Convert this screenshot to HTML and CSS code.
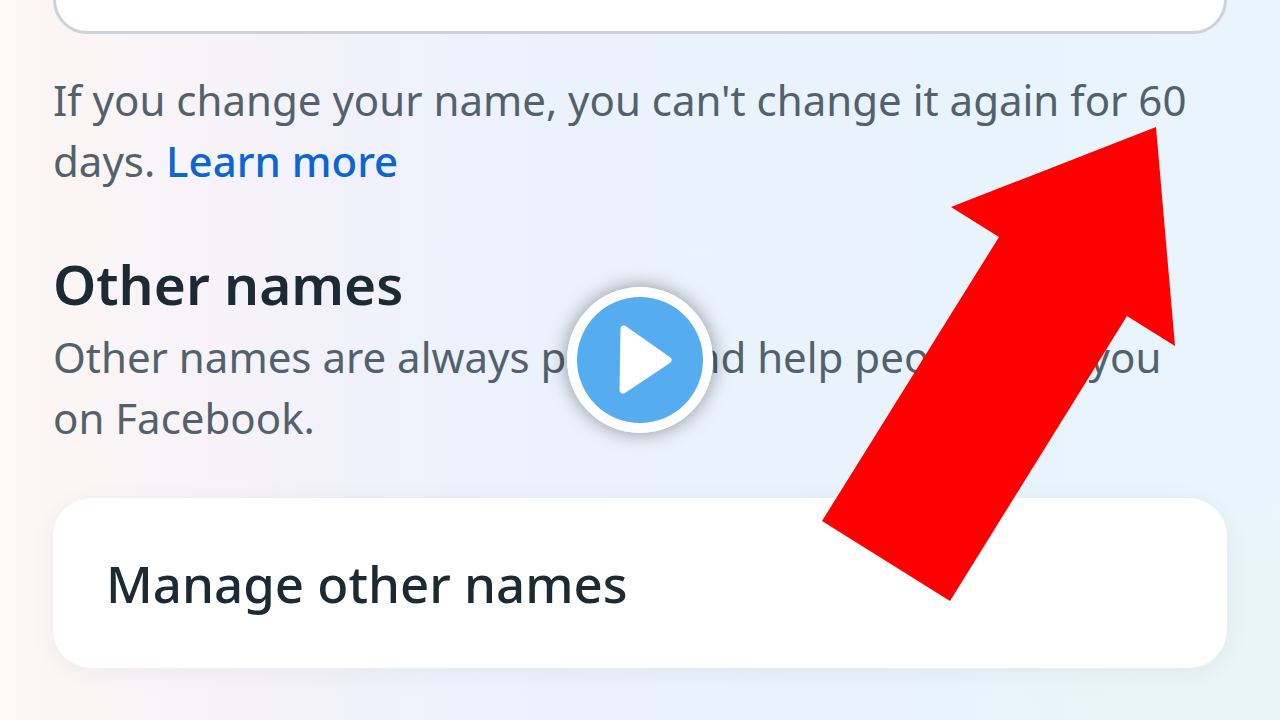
FILE: index.html
```
<!DOCTYPE html>
<html lang="en">
<head>
    <meta charset="UTF-8">
    <meta name="viewport" content="width=device-width, initial-scale=1.0">
    <title>Other names</title>
    <link rel="stylesheet" href="styles.css">
</head>
<body>
    <main class="page">
        <input class="name-field" type="text" aria-label="Name">
        <p class="note">If you change your name, you can't change it again for 60 days. <a href="#learn-more">Learn more</a></p>

        <section class="other-names">
            <h2>Other names</h2>
            <p class="note">Other names are always public and help people find you on Facebook.</p>
            <button class="manage-card" type="button">Manage other names</button>
        </section>

        <!-- Arrow over the content -->
        <svg class="arrow" viewBox="0 0 353 474" aria-hidden="true">
            <polygon points="334,0 129,80 177,110 0,394 128,474 305,189 353,219"/>
        </svg>

        <!-- Play button -->
        <button class="play" type="button" aria-label="Play video">
            <svg viewBox="0 0 146 146" aria-hidden="true">
                <circle class="play-ring" cx="73" cy="73" r="73"/>
                <circle class="play-disc" cx="73" cy="73" r="63"/>
                <path class="play-icon" d="M57 42 L101 73 L56 103 Z"/>
            </svg>
        </button>
    </main>
</body>
</html>
```

FILE: styles.css
```
* {
    margin: 0;
    padding: 0;
    box-sizing: border-box;
    font-family: 'Noto Sans', sans-serif;
}

:root {
    --text: #1c2b33;
    --muted-text: #52616b;
    --link: #0a66d0;
    --border: #cfd1d8;
    --white: #ffffff;
}

body {
    background:
        radial-gradient(ellipse at 100% 92%, #e9f5f6 0%, rgba(233,245,246,0) 20%),
        linear-gradient(90deg, #fcf8f5 0%, #fbf5f5 6%, #f7f3f8 16%, #f1f1fb 28%, #ebf2fc 45%, #e9f3fc 75%, #eaf4fd 100%);
    color: var(--text);
}

.page {
    position: relative;
    min-height: 100vh;
    padding: 0 53px 52px;
    overflow: hidden;
}

/* Name field */
.name-field {
    display: block;
    width: 100%;
    height: 34px;
    padding: 0 36px;
    border: 3px solid var(--border);
    border-top: none;
    border-radius: 0 0 34px 34px;
    background: var(--white);
    font-size: 42px;
    outline: none;
}

.note {
    padding-right: 16px;
    color: var(--muted-text);
    font-size: 42px;
    line-height: 61px;
}

.name-field + .note {
    margin-top: 35px;
}

.note a {
    color: var(--link);
    font-weight: 500;
    text-decoration: none;
}

/* Other names */
.other-names {
    margin-top: 56px;
}

.other-names h2 {
    margin-bottom: 5px;
    font-size: 55px;
    font-weight: 600;
    line-height: 74px;
}

.manage-card {
    display: block;
    width: 100%;
    margin-top: 50px;
    padding: 48px 53px;
    border: none;
    border-radius: 38px;
    background: var(--white);
    box-shadow: 0 4px 24px rgba(28,43,51,0.05);
    color: var(--text);
    font-size: 51px;
    font-weight: 500;
    line-height: 74px;
    text-align: left;
    cursor: pointer;
}

/* Overlays */
.arrow {
    position: absolute;
    top: 127px;
    right: 105px;
    width: 353px;
    fill: #ff0000;
}

.play {
    position: absolute;
    top: 50%;
    left: 50%;
    width: 146px;
    height: 146px;
    transform: translate(-50%, -50%);
    border: none;
    border-radius: 50%;
    background: none;
    box-shadow: 0 0 20px rgba(0,0,0,0.4);
    cursor: pointer;
}

.play svg {
    display: block;
}

.play-ring {
    fill: var(--white);
}

.play-disc {
    fill: #55acee;
}

.play-icon {
    fill: var(--white);
    stroke: var(--white);
    stroke-width: 7;
    stroke-linejoin: round;
}
```
